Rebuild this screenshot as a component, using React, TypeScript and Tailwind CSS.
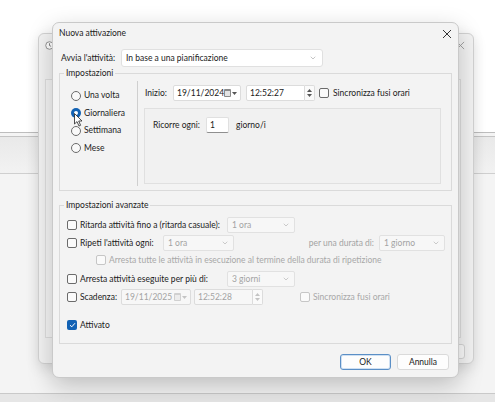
import React from 'react';
import { ChevronDown } from 'lucide-react';

const Radio: React.FC<{ checked?: boolean }> = ({ checked }) =>
  checked ? (
    <span className="flex h-[10px] w-[10px] shrink-0 items-center justify-center rounded-full bg-[#1262b4]">
      <span className="h-[4px] w-[4px] rounded-full bg-white" />
    </span>
  ) : (
    <span className="h-[10px] w-[10px] shrink-0 rounded-full border border-[#6b6b6b] bg-[#f9f9f9]" />
  );

const Check: React.FC<{ checked?: boolean; disabled?: boolean }> = ({ checked, disabled }) =>
  checked ? (
    <span className="flex h-[10px] w-[10px] shrink-0 items-center justify-center rounded-[2px] bg-[#1262b4]">
      <svg width="7" height="6" viewBox="0 0 7 6">
        <path d="M1 3.2 L2.8 4.8 L6 1.2" fill="none" stroke="#fff" strokeWidth="1" />
      </svg>
    </span>
  ) : (
    <span
      className={`h-[10px] w-[10px] shrink-0 rounded-[2px] border bg-[#fafafa] ${
        disabled ? 'border-[#c6c6c6]' : 'border-[#6b6b6b]'
      }`}
    />
  );

const Combo: React.FC<{ value: string; width: string; disabled?: boolean }> = ({ value, width, disabled }) => (
  <div
    className={`flex h-[16px] items-center justify-between rounded-[2px] border border-[#e1e1e1] px-[4px] ${width} ${
      disabled ? 'bg-[#f7f7f7] text-[#a3a3a3]' : 'bg-white text-[#1b1b1b]'
    }`}
  >
    <span>{value}</span>
    <ChevronDown size={8} strokeWidth={1.5} className="text-[#9c9c9c]" />
  </div>
);

const DateBox: React.FC<{ value: string; width: string; disabled?: boolean }> = ({ value, width, disabled }) => (
  <div
    className={`flex h-[16px] items-center justify-between rounded-[2px] border border-[#dcdcdc] pl-[3px] pr-[3px] ${width} ${
      disabled ? 'bg-[#f7f7f7] text-[#a3a3a3]' : 'bg-white text-[#1b1b1b]'
    }`}
  >
    <span>{value}</span>
    <span className="flex items-center gap-[1px]">
      <span className={`h-[8px] w-[7px] rounded-[1px] border-t-2 border ${disabled ? 'border-[#d0d0d0] bg-[#ececec]' : 'border-[#8a8a8a] bg-[#e4e4e4]'}`} />
      <svg width="5" height="3" viewBox="0 0 5 3">
        <path d="M0 0 L5 0 L2.5 3 Z" fill={disabled ? '#c4c4c4' : '#555'} />
      </svg>
    </span>
  </div>
);

const TimeBox: React.FC<{ value: string; width: string; disabled?: boolean }> = ({ value, width, disabled }) => (
  <div className={`flex h-[16px] items-stretch ${width}`}>
    <div
      className={`flex flex-1 items-center rounded-l-[2px] border border-[#dcdcdc] pl-[3px] ${
        disabled ? 'bg-[#f7f7f7] text-[#a3a3a3]' : 'bg-white text-[#1b1b1b]'
      }`}
    >
      {value}
    </div>
    <div className="flex w-[10px] flex-col items-center justify-center gap-[2px] rounded-r-[2px] border border-l-0 border-[#dcdcdc] bg-[#fafafa]">
      <svg width="5" height="3" viewBox="0 0 5 3">
        <path d="M0 3 L5 3 L2.5 0 Z" fill={disabled ? '#c4c4c4' : '#555'} />
      </svg>
      <svg width="5" height="3" viewBox="0 0 5 3">
        <path d="M0 0 L5 0 L2.5 3 Z" fill={disabled ? '#c4c4c4' : '#555'} />
      </svg>
    </div>
  </div>
);

const CloseX: React.FC<{ color: string; size: number }> = ({ color, size }) => (
  <svg width={size} height={size} viewBox="0 0 10 10">
    <path d="M1 1 L9 9 M9 1 L1 9" stroke={color} strokeWidth="1" />
  </svg>
);

export default function App() {
  return (
    <div className="relative h-[402px] w-[495px] overflow-hidden bg-white font-['Lato',sans-serif] text-[8.5px] leading-[11px] text-[#1b1b1b]">
      {/* --- page behind --- */}
      <div className="flex h-full flex-col">
        <div className="h-[132px] bg-white" />
        <div className="h-[1px] bg-[#bdbdbd]" />
        <div className="h-[3px] bg-[#f4f4f4]" />
        <div className="h-[1px] bg-[#c4c4c4]" />
        <div className="h-[36px] bg-gradient-to-b from-[#e9e9e9] to-[#f2f2f2]" />
        <div className="h-[1px] bg-[#cfcfcf]" />
        <div className="flex-1 bg-[#f4f4f4]" />
        <div className="h-[1px] bg-[#c9c9c9]" />
        <div className="h-[8px] bg-[#e6e6e6]" />
      </div>

      {/* --- back window --- */}
      <div className="absolute left-[38px] top-[33px] flex h-[331px] w-[436px] flex-col rounded-[6px] border border-[#d2d2d2] bg-[#f3f3f3] shadow-[0_4px_14px_rgba(0,0,0,0.12)]">
        <div className="flex h-[22px] items-center justify-between pl-[6px] pr-[8px]">
          <svg width="9" height="9" viewBox="0 0 10 10">
            <circle cx="5" cy="5" r="4.2" fill="#fff" stroke="#8a8a8a" strokeWidth="1" />
            <path d="M5 2.5 L5 5 L6.8 6" stroke="#666" strokeWidth="0.9" fill="none" />
          </svg>
          <CloseX color="#9a9a9a" size={9} />
        </div>
        <div className="ml-[6px] mr-[12px] mt-[23px] h-[259px] border border-[#dedede] bg-[#f6f6f6]" />
        <div className="mt-[6px] flex justify-end pr-[8px]">
          <div className="h-[15px] w-[60px] rounded-[3px] border border-[#d6d6d6] bg-[#fbfbfb]" />
        </div>
      </div>

      {/* --- main dialog --- */}
      <div className="absolute left-[52px] top-[22px] flex h-[356px] w-[407px] flex-col rounded-[7px] border border-[#c9c9c9] bg-[#f3f3f3] shadow-[0_8px_24px_rgba(0,0,0,0.22)]">
        <div className="flex h-[21px] items-center justify-between pl-[6px] pr-[6px]">
          <span>Nuova attivazione</span>
          <CloseX color="#333" size={10} />
        </div>

        <div className="mt-[5px] flex h-[18px] items-center pl-[8px]">
          <span className="w-[60px]">Avvia l'attività:</span>
          <div className="flex h-[18px] w-[202px] items-center justify-between rounded-[3px] border border-[#e0e0e0] bg-white pl-[4px] pr-[5px]">
            <span>In base a una pianificazione</span>
            <ChevronDown size={8} strokeWidth={1.5} className="text-[#8a8a8a]" />
          </div>
        </div>

        {/* Impostazioni */}
        <fieldset className="mx-[6px] mt-[1px] border border-[#dadada]">
          <legend className="ml-[4px] px-[2px]">Impostazioni</legend>
          <div className="flex">
            <div className="flex w-[77px] flex-col pl-[11px] pt-[8px]">
              {[
                ['Una volta', false],
                ['Giornaliera', true],
                ['Settimana', false],
                ['Mese', false],
              ].map(([label, on]) => (
                <div key={label as string} className="flex h-[17.5px] items-center gap-[3px]">
                  <Radio checked={on as boolean} />
                  <span>{label as string}</span>
                </div>
              ))}
            </div>
            <div className="mb-[4px] mt-[2px] w-[1px] bg-[#cfcfcf]" />
            <div className="flex flex-col pb-[6px] pl-[6px] pt-[6px]">
              <div className="flex h-[16px] items-center pl-[1px]">
                <span className="w-[28px]">Inizio:</span>
                <DateBox value="19/11/2024" width="w-[68px]" />
                <div className="ml-[5px]">
                  <TimeBox value="12:52:27" width="w-[69px]" />
                </div>
                <div className="ml-[4px] flex items-center gap-[4px]">
                  <Check />
                  <span>Sincronizza fusi orari</span>
                </div>
              </div>
              <div className="mt-[7px] h-[76px] w-[297px] border border-[#e0e0e0] bg-[#f1f1f1] pl-[8px] pt-[8px]">
                <div className="flex h-[16px] items-center">
                  <span className="w-[53px]">Ricorre ogni:</span>
                  <div className="flex h-[16px] w-[23px] items-center rounded-[2px] border border-[#e0e0e0] border-b-[#8f8f8f] bg-white pl-[3px]">
                    1
                  </div>
                  <span className="ml-[7px]">giorno/i</span>
                </div>
              </div>
            </div>
          </div>
        </fieldset>

        {/* Impostazioni avanzate */}
        <fieldset className="mx-[6px] mt-[9px] border border-[#dadada] pb-[10px] pl-[7px] pr-[6px] pt-[6px]">
          <legend className="ml-[-3px] px-[2px]">Impostazioni avanzate</legend>
          <div className="flex h-[16px] items-center">
            <Check />
            <span className="ml-[3px] w-[147px]">Ritarda attività fino a (ritarda casuale):</span>
            <Combo value="1 ora" width="w-[68px]" disabled />
          </div>
          <div className="mt-[2px] flex h-[16px] items-center">
            <Check />
            <span className="ml-[3px] w-[83px]">Ripeti l'attività ogni:</span>
            <Combo value="1 ora" width="w-[71px]" disabled />
            <span className="mr-[5px] flex-1 text-right text-[#a3a3a3]">per una durata di:</span>
            <Combo value="1 giorno" width="w-[66px]" disabled />
          </div>
          <div className="mt-[2px] flex h-[14px] items-center pl-[29px]">
            <Check disabled />
            <span className="ml-[3px] text-[#a8a8a8]">
              Arresta tutte le attività in esecuzione al termine della durata di ripetizione
            </span>
          </div>
          <div className="mt-[4px] flex h-[16px] items-center">
            <Check />
            <span className="ml-[3px] w-[147px]">Arresta attività eseguite per più di:</span>
            <Combo value="3 giorni" width="w-[68px]" disabled />
          </div>
          <div className="mt-[2px] flex h-[16px] items-center">
            <Check />
            <span className="ml-[3px] w-[41px]">Scadenza:</span>
            <DateBox value="19/11/2025" width="w-[70px]" disabled />
            <div className="ml-[3px]">
              <TimeBox value="12:52:28" width="w-[69px]" disabled />
            </div>
            <div className="ml-[37px] flex items-center gap-[3px]">
              <Check disabled />
              <span className="text-[#a8a8a8]">Sincronizza fusi orari</span>
            </div>
          </div>
          <div className="mt-[12px] flex h-[16px] items-center">
            <Check checked />
            <span className="ml-[3px]">Attivato</span>
          </div>
        </fieldset>

        <div className="mt-[10px] flex h-[16px] justify-end gap-[6px] pr-[9px]">
          <button className="flex w-[51px] items-center justify-center rounded-[3px] border border-[#5b8fc6] bg-[#fdfdfd] shadow-[inset_0_0_0_1px_#cfe0f2]">
            OK
          </button>
          <button className="flex w-[52px] items-center justify-center rounded-[3px] border border-[#dadada] bg-[#fdfdfd]">
            Annulla
          </button>
        </div>
      </div>

      {/* --- mouse cursor --- */}
      <svg className="absolute left-[74px] top-[113px]" width="10" height="14" viewBox="0 0 10 14">
        <path d="M0.5 0.5 L0.5 11 L3 8.6 L5 13 L6.6 12.3 L4.7 8 L8 8 Z" fill="#fff" stroke="#222" strokeWidth="0.8" />
      </svg>
    </div>
  );
}
